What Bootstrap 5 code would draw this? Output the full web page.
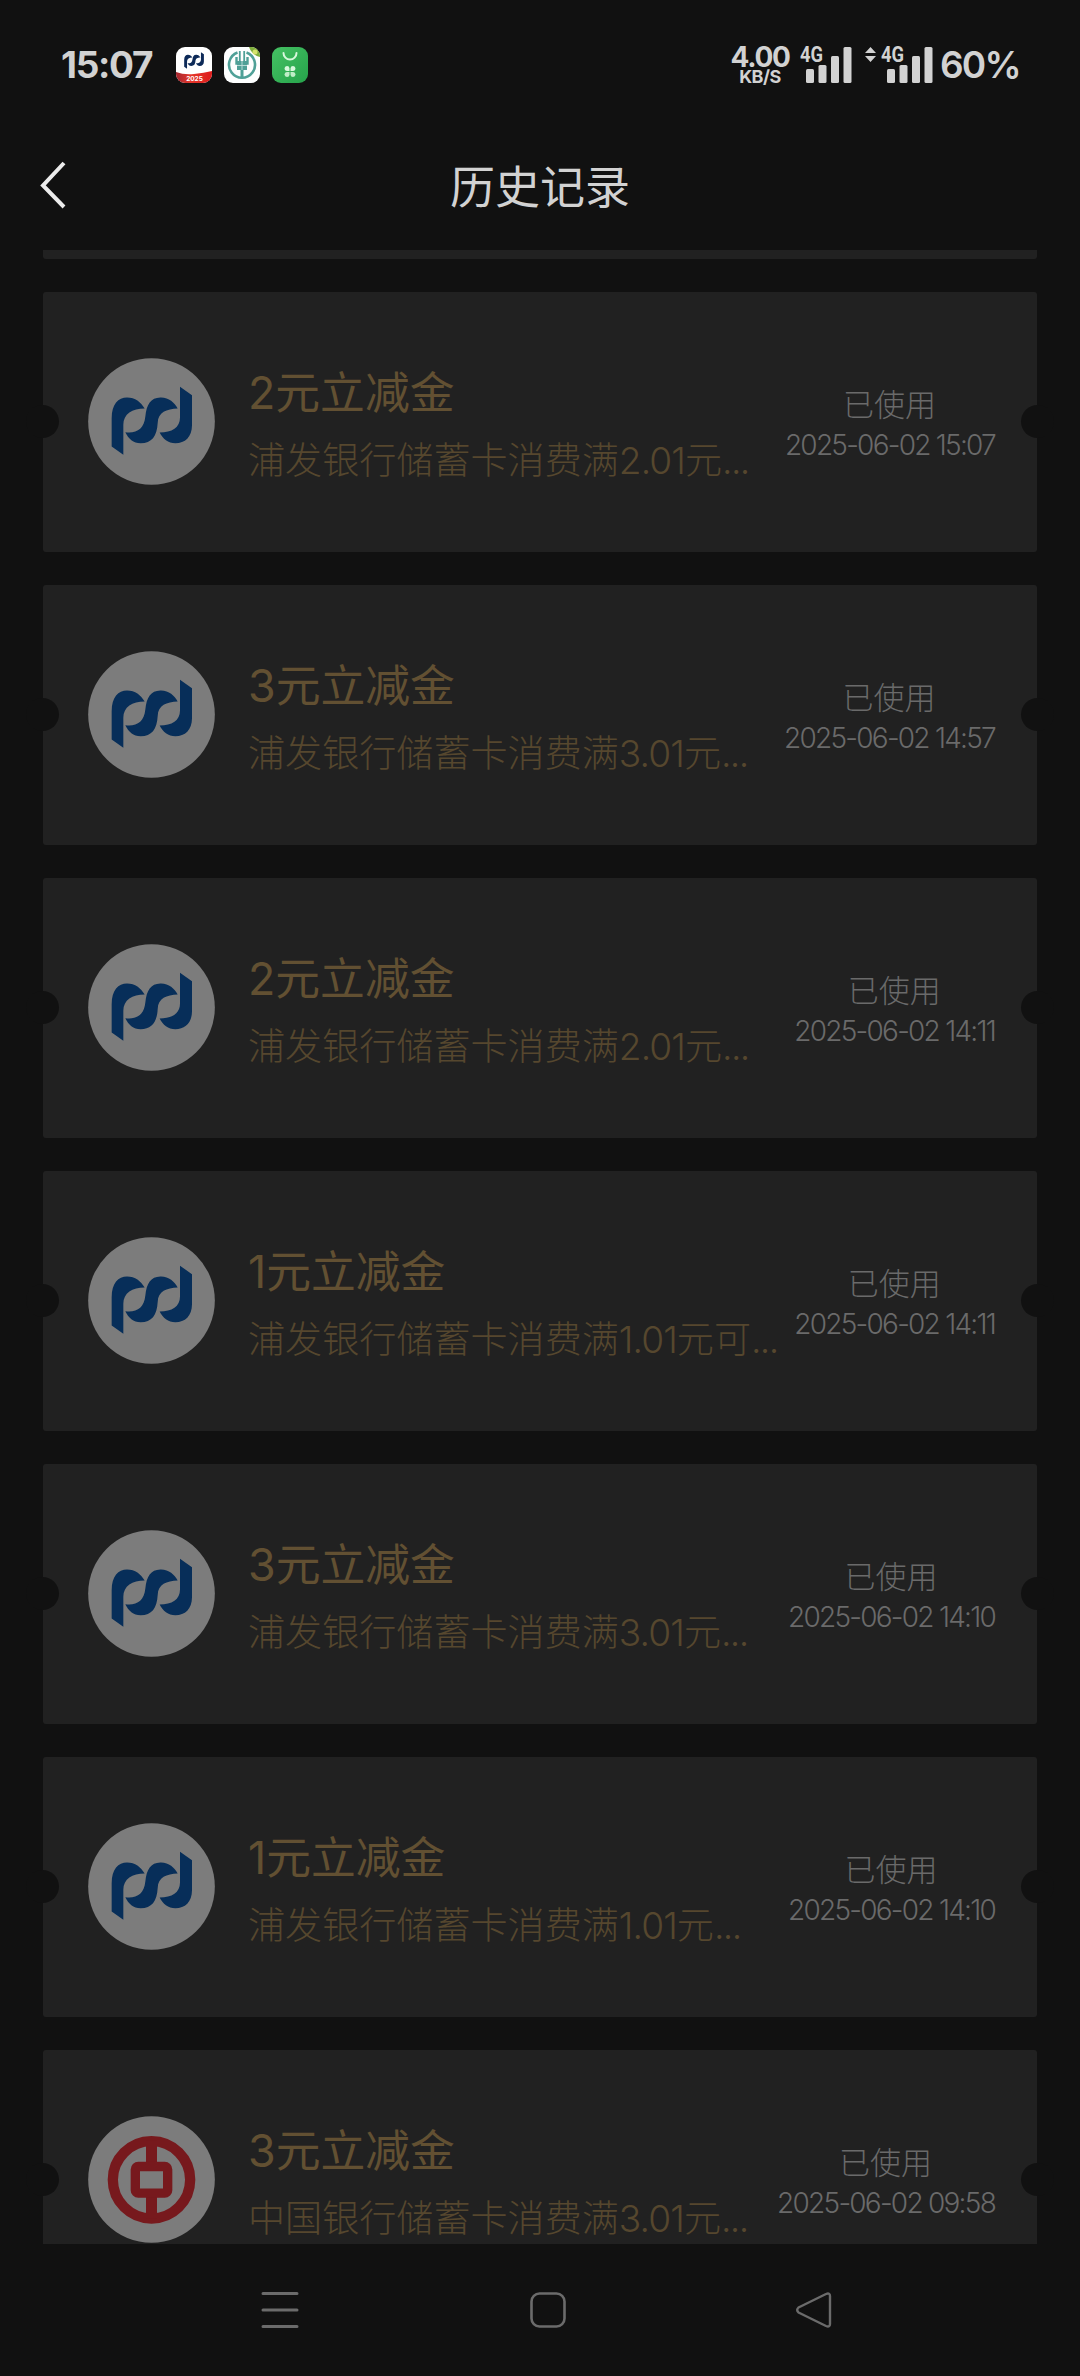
<!DOCTYPE html>
<html lang="zh-CN">
<head>
<meta charset="utf-8">
<meta name="viewport" content="width=device-width, initial-scale=1">
<title>历史记录</title>
<link href="https://cdn.jsdelivr.net/npm/bootstrap@5.3.0/dist/css/bootstrap.min.css" rel="stylesheet">
<style>
  body { background: #111; color: #d2d2d2; font-family: Inter, "Noto Sans CJK SC", sans-serif; }
  .screen { width: 1080px; height: 2376px; }
  .status-bar { height: 130px; padding: 0 61px; }
  .clock { font-size: 37px; font-weight: 700; letter-spacing: -1.3px; line-height: 48px; width: 115px; }
  .apps { gap: 12px; }
  .speed { width: 60px; margin-right: 10px; font-weight: 700; text-align: center; }
  .speed-num { font-size: 28px; letter-spacing: -1.3px; line-height: 22px; }
  .speed-unit { font-size: 18px; letter-spacing: -.5px; line-height: 17px; }
  .net-label { font: 700 22px/1 Roboto, sans-serif; fill: #d2d2d2; }
  .battery { font-size: 37px; font-weight: 600; letter-spacing: -1.8px; line-height: 48px; margin-left: 7px; width: 79px; }
  .title-bar { height: 120px; padding: 0 40px; }
  .page-title { font-size: 45px; font-weight: 400; line-height: 60px; margin: 0 0 5px; }
  .records { height: 1994px; padding: 0 43px; }
  .coupon { height: 260px; margin-bottom: 33px; background: #212121; border: 0; border-radius: 3px; padding: 0 43px 0 45px; flex: none; }
  .coupon-tail { height: 9px; border-radius: 0 0 3px 3px; }
  .notch { width: 33px; height: 33px; background: #111; top: 113px; }
  .notch-l { left: -17px; }
  .notch-r { right: -17px; }
  .bank { width: 127px; height: 127px; flex: none; margin-top: -1px; }
  .info { margin-left: 33px; padding-top: 9px; white-space: nowrap; }
  .amount { font-size: 44.8px; line-height: 68px; color: #625032; font-weight: 400; }
  .rule { font-size: 37.1px; line-height: 68px; color: #56472e; font-weight: 300; }
  .num { letter-spacing: -.9px; }
  .dots { letter-spacing: -1.6px; }
  .used { padding-top: 6px; text-align: center; white-space: nowrap; color: #6a6a6a; font-weight: 300; }
  .state { font-size: 31px; line-height: 40px; }
  .when { font-size: 28px; line-height: 40px; letter-spacing: -1.75px; margin-right: -1px; }
  .nav-keys { height: 132px; }
</style>
</head>
<body>
<svg class="d-none" xmlns="http://www.w3.org/2000/svg">
  <symbol id="pd" viewBox="70 85 250 220">
    <path d="M75 187C75 145 95 125 121 125C146 125 162 139 174 158C137 158 110 174 110 207V297L75 272Z"/>
    <path d="M116 229C150 233 172 220 176 182C180 145 192 126 221 125C246 124 263 140 273 158C240 160 214 168 213 202C211 241 195 262 162 262C140 262 125 248 116 229Z"/>
    <path d="M280 93L316 118V208C316 243 295 262 266 262C245 262 228 249 219 230C256 230 280 215 280 185Z"/>
  </symbol>
  <symbol id="spdb" viewBox="4 6.5 381 381">
    <circle cx="194.5" cy="197" r="190" fill="#7c7c7c"/>
    <use href="#pd" x="70" y="85" width="250" height="220" fill="#072e59"/>
  </symbol>
  <symbol id="boc" viewBox="4 6.5 381 381">
    <circle cx="194.5" cy="197" r="190" fill="#7c7c7c"/>
    <g fill="none" stroke="#77191d">
      <circle cx="194.5" cy="198" r="116" stroke-width="31"/>
      <path d="M194.500 80V150M194.500 245V315" stroke-width="33"/>
      <rect x="146" y="158" width="97" height="80" rx="9" stroke-width="28"/>
    </g>
  </symbol>
</svg>

<div class="screen d-flex flex-column overflow-hidden">
  <header class="status-bar d-flex align-items-center justify-content-between flex-shrink-0">
    <div class="d-flex align-items-center">
      <div class="clock">15:07</div>
      <div class="apps d-flex">
        <svg width="36" height="36" viewBox="0 0 36 36">
          <defs>
            <clipPath id="tile"><rect width="36" height="36" rx="9"/></clipPath>
            <linearGradient id="red"><stop offset="0" stop-color="#a3262f"/><stop offset=".4" stop-color="#e5382c"/><stop offset="1" stop-color="#dd1b1b"/></linearGradient>
          </defs>
          <g clip-path="url(#tile)">
            <rect width="36" height="36" fill="#fff"/>
            <path d="M0 25Q8 28 18 27T36 24V36H0Z" fill="url(#red)"/>
          </g>
          <use href="#pd" x="7.500" y="4.500" width="21" height="18" fill="#0d2a58"/>
          <text x="18.500" y="34" text-anchor="middle" font-family="Inter, sans-serif" font-size="6.500" font-weight="700" fill="#fff">2025</text>
        </svg>
        <svg width="36" height="36" viewBox="0 0 36 36">
          <g clip-path="url(#tile)">
            <rect width="36" height="36" fill="#fdfefe"/>
            <path d="M25 0H36V10Q28 8 25 0Z" fill="#7fae3c"/>
            <circle cx="31" cy="5" r="2.500" fill="#d5e36c"/>
          </g>
          <g fill="none" stroke="#4fa097">
            <path d="M13.500 5.500A13 13 0 1 0 22.500 5.500" stroke-width="2.600"/>
            <path d="M12.500 10V16.500H23.500V10" stroke-width="2.400"/>
            <path d="M15.800 4V14M20.200 4V14" stroke-width="1.800"/>
            <path d="M18 20V31" stroke-width="3"/>
          </g>
          <path d="M13 14H23V23H13Z" fill="#4fa097"/>
          <path d="M18 14V23M13 18.500H23" stroke="#bfe0dc" stroke-width=".9"/>
        </svg>
        <svg width="36" height="36" viewBox="0 0 36 36">
          <defs><linearGradient id="grn" x2="1" y2="1"><stop offset="0" stop-color="#45c163"/><stop offset="1" stop-color="#26a34b"/></linearGradient></defs>
          <rect width="36" height="36" rx="9" fill="url(#grn)"/>
          <path d="M11.500 6A6.500 6.500 0 0 0 24.500 6" fill="none" stroke="#d8f8dc" stroke-width="2" stroke-linecap="round"/>
          <g fill="#d8f8dc">
            <path d="M17.500 24H14.800A2.500 2.500 0 1 1 17.500 21.300Z"/><path d="M18.500 24H21.200A2.500 2.500 0 1 0 18.500 21.300Z"/>
            <path d="M17.500 25H14.800A2.500 2.500 0 1 0 17.500 27.700Z" opacity=".85"/><path d="M18.500 25H21.200A2.500 2.500 0 1 1 18.500 27.700Z" opacity=".85"/>
          </g>
        </svg>
      </div>
    </div>
    <div class="d-flex align-items-center">
      <div class="speed d-flex flex-column">
        <div class="speed-num">4.00</div>
        <div class="speed-unit">KB/S</div>
      </div>
      <svg width="133" height="54" viewBox="0 -6 133 54">
        <g fill="#d2d2d2">
          <text class="net-label" x="0" y="18" textLength="23" lengthAdjust="spacingAndGlyphs">4G</text>
          <rect x="6" y="25" width="8" height="14" rx="1.500"/><rect x="18.500" y="21" width="8" height="18" rx="1.500"/><rect x="31" y="12" width="8" height="27" rx="1.500"/><rect x="43.500" y="3" width="8" height="36" rx="1.500"/>
          <path d="M70.500 3L76 9H65ZM65 12H76L70.500 18Z"/>
          <text class="net-label" x="81" y="18" textLength="23" lengthAdjust="spacingAndGlyphs">4G</text>
          <rect x="87" y="25" width="8" height="14" rx="1.500"/><rect x="99.500" y="21" width="8" height="18" rx="1.500"/><rect x="112" y="12" width="8" height="27" rx="1.500"/><rect x="124.500" y="3" width="8" height="36" rx="1.500"/>
        </g>
      </svg>
      <div class="battery">60%</div>
    </div>
  </header>

  <nav class="title-bar d-flex align-items-center flex-shrink-0">
    <div class="col d-flex">
      <svg width="26" height="50" viewBox="0 0 26 50" class="mb-2"><path d="M24 2L3 24.500L24 46" fill="none" stroke="#ececec" stroke-width="4"/></svg>
    </div>
    <h1 class="page-title">历史记录</h1>
    <div class="col"></div>
  </nav>

  <main class="records d-flex flex-column overflow-hidden flex-shrink-0" id="records">
    <div class="coupon coupon-tail"></div>
  </main>

  <footer class="nav-keys d-flex flex-shrink-0">
    <svg width="1080" height="132" viewBox="0 0 1080 132" fill="none" stroke="#6b6b6b">
      <path d="M263 49.500H297M263 66H297M263 82.500H297" stroke-width="3" stroke-linecap="round"/>
      <rect x="531.500" y="49.500" width="33" height="33" rx="8" stroke-width="2.600"/>
      <path d="M798.500 63.500L826 50Q830 48.500 830 52V80Q830 83.500 826 82L798.500 68.500Q796 66 798.500 63.500Z" stroke-width="2.400" stroke-linejoin="round"/>
    </svg>
  </footer>
</div>

<template id="coupon">
  <article class="coupon card flex-row align-items-center position-relative">
    <span class="notch notch-l position-absolute rounded-circle"></span>
    <svg class="bank"><use/></svg>
    <div class="info">
      <div class="amount"></div>
      <div class="rule"><span class="bank-name"></span>银行储蓄卡消费满<span class="num"></span><span class="tail"></span><span class="dots">...</span></div>
    </div>
    <div class="used ms-auto">
      <div class="state">已使用</div>
      <div class="when"></div>
    </div>
    <span class="notch notch-r position-absolute rounded-circle"></span>
  </article>
</template>
<script src="https://cdn.jsdelivr.net/npm/bootstrap@5.3.0/dist/js/bootstrap.bundle.min.js"></script>
<script>
  const rows = [
    ["spdb", "浦发", 2, "元", "15:07"],
    ["spdb", "浦发", 3, "元", "14:57"],
    ["spdb", "浦发", 2, "元", "14:11"],
    ["spdb", "浦发", 1, "元可", "14:11"],
    ["spdb", "浦发", 3, "元", "14:10"],
    ["spdb", "浦发", 1, "元", "14:10"],
    ["boc", "中国", 3, "元", "09:58"]
  ];
  const list = document.getElementById("records");
  const tpl = document.getElementById("coupon");
  for (const [logo, bank, yuan, tail, time] of rows) {
    const node = tpl.content.cloneNode(true);
    node.querySelector("use").setAttribute("href", "#" + logo);
    node.querySelector(".amount").textContent = yuan + "元立减金";
    node.querySelector(".bank-name").textContent = bank;
    node.querySelector(".num").textContent = yuan + ".01";
    node.querySelector(".tail").textContent = tail;
    node.querySelector(".when").textContent = "2025-06-02 " + time;
    list.append(node);
  }
</script>
</body>
</html>
